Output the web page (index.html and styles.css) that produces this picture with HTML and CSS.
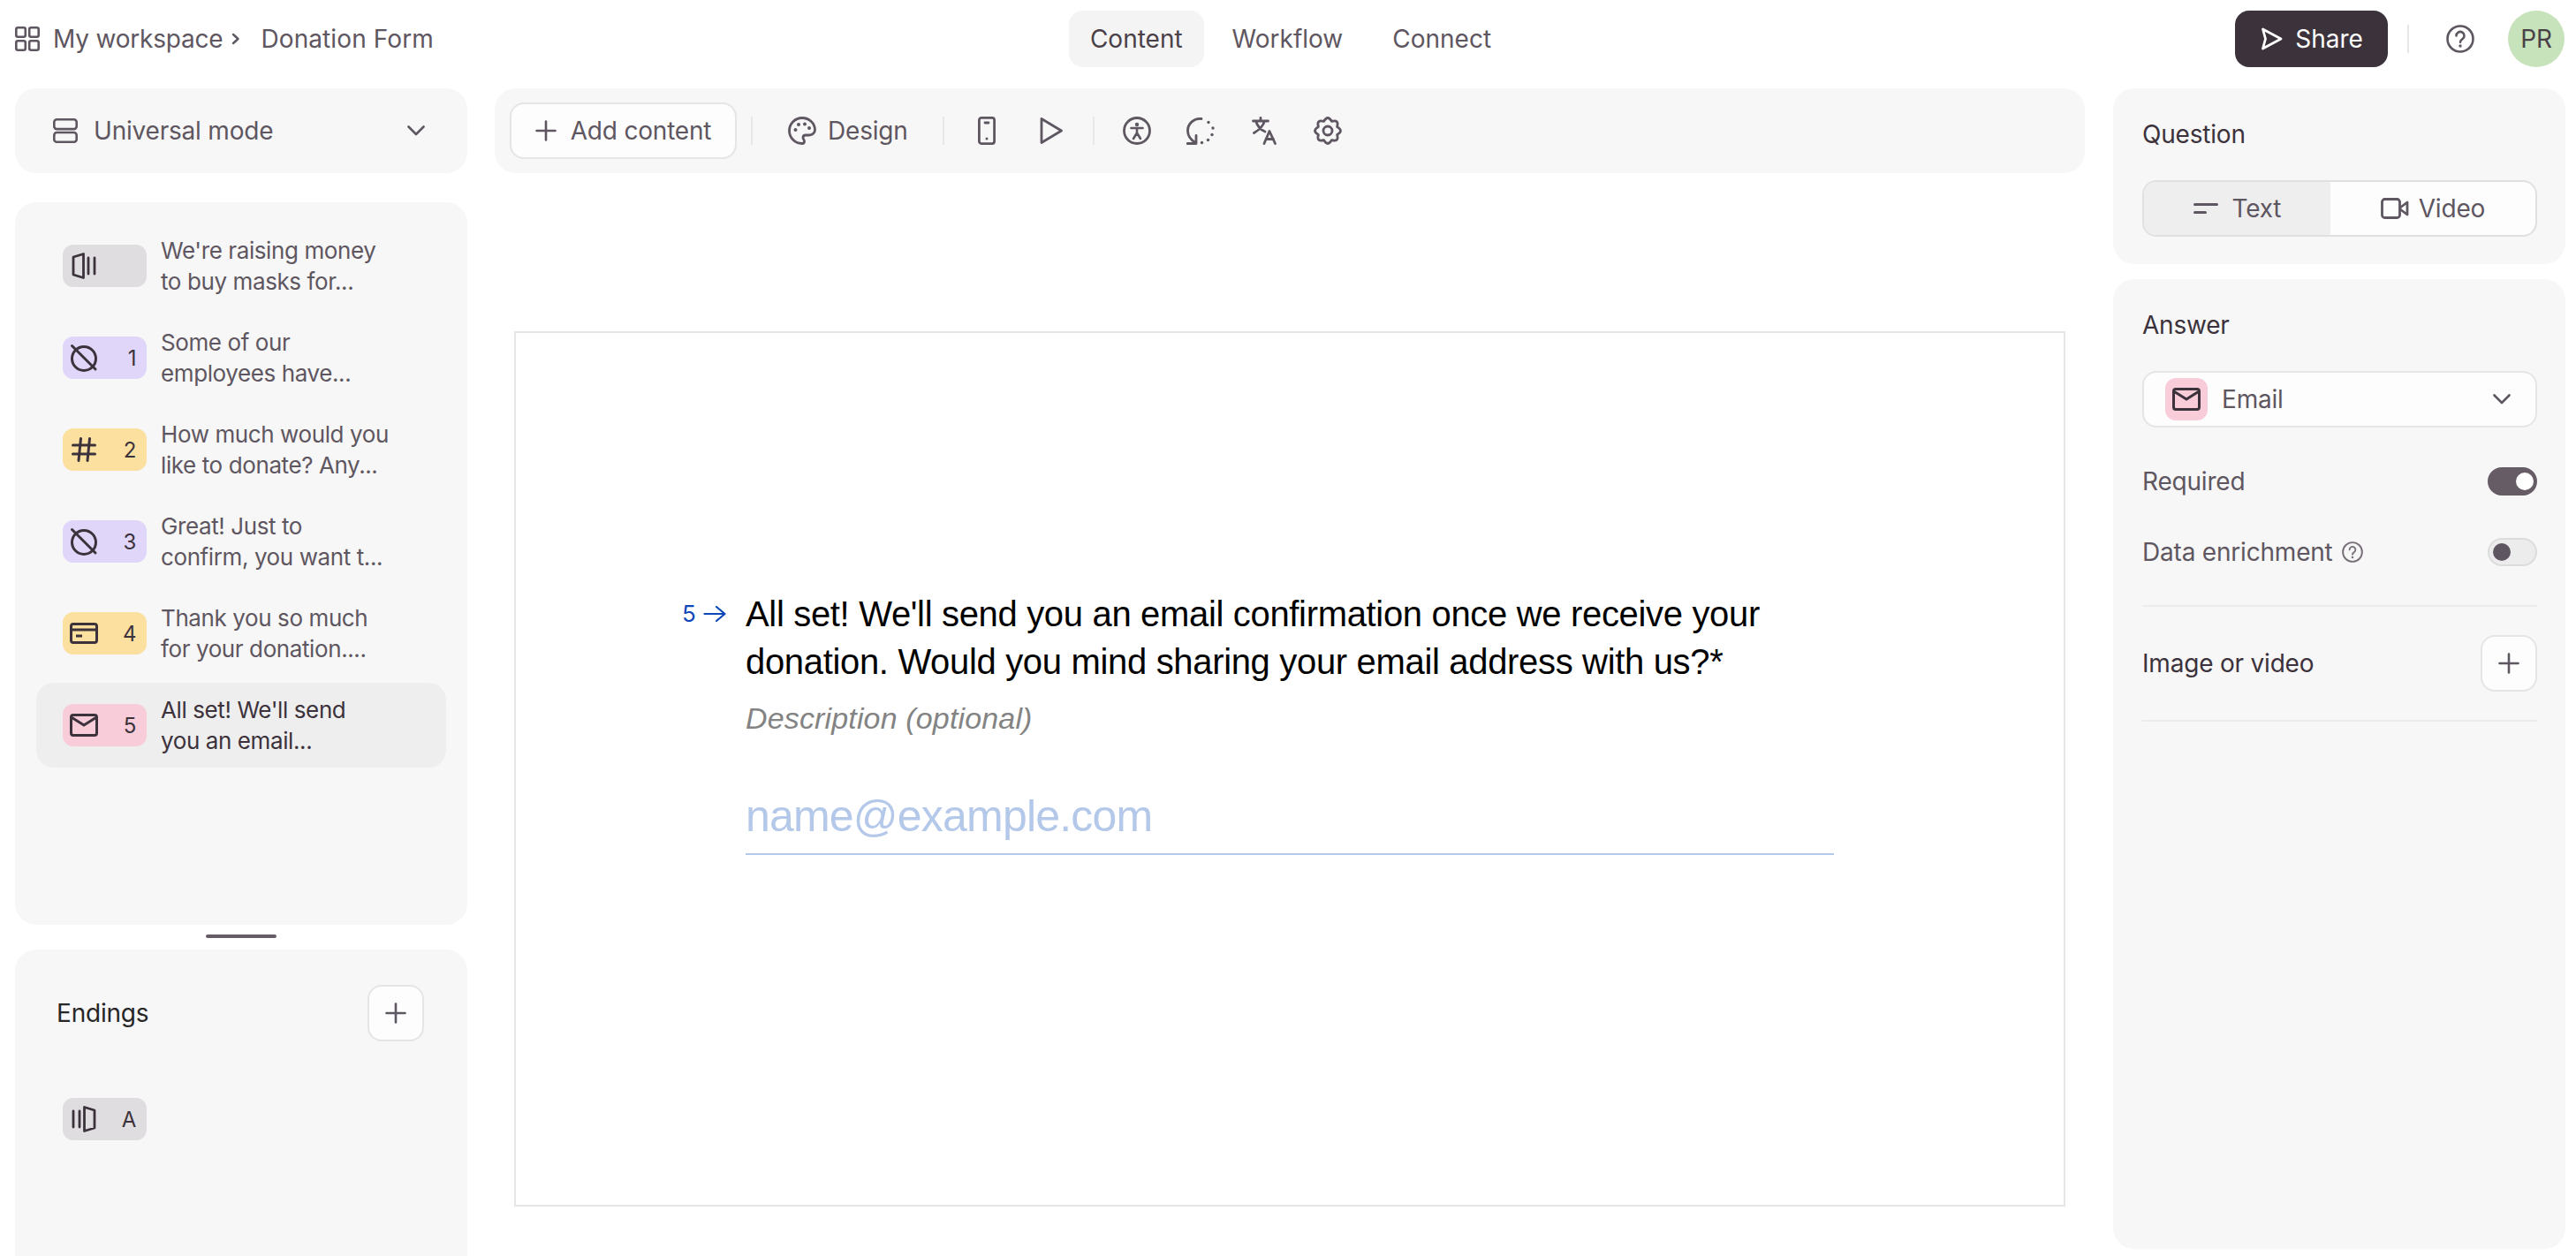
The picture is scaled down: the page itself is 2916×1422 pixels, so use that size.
FILE: index.html
```html
<!DOCTYPE html>
<html lang="en">
<head>
<meta charset="utf-8">
<title>Donation Form</title>
<link rel="stylesheet" href="styles.css">
</head>
<body>
<svg class="defs" width="0" height="0" aria-hidden="true">
  <symbol id="i-plus" viewBox="0 0 24 24"><path d="M12 1.500v21M1.500 12h21" fill="none" stroke="currentColor" stroke-width="2.600" stroke-linecap="round"/></symbol>
  <symbol id="i-chev" viewBox="0 0 20 12"><path d="M1.500 1.500 10 10l8.500-8.500" fill="none" stroke="currentColor" stroke-width="2.600" stroke-linecap="round" stroke-linejoin="round"/></symbol>
  <symbol id="i-mail" viewBox="0 -3 32 32"><rect x="1.500" y="1.500" width="29" height="23" rx="2.500" fill="none" stroke="currentColor" stroke-width="3"/><path d="M2.500 4.500 16 13 29.500 4.500" fill="none" stroke="currentColor" stroke-width="3"/></symbol>
  <symbol id="i-block" viewBox="0 0 32 32"><circle cx="16" cy="17" r="13.500" fill="none" stroke="currentColor" stroke-width="3"/><path d="M2.500 2.500 29 29" fill="none" stroke="currentColor" stroke-width="3" stroke-linecap="round"/></symbol>
  <symbol id="i-hash" viewBox="-2 -2 32 32"><path d="M10.500 1.500 8 26.500M20.500 1.500 18 26.500M1.500 9h25M1.500 19h25" fill="none" stroke="currentColor" stroke-width="3" stroke-linecap="round"/></symbol>
  <symbol id="i-card" viewBox="0 -4 32 32"><rect x="1.500" y="1.500" width="29" height="21" rx="2.500" fill="none" stroke="currentColor" stroke-width="3"/><path d="M2 8h28M7 15h7" fill="none" stroke="currentColor" stroke-width="3"/></symbol>
  <symbol id="i-welcome" viewBox="-2 -1 32 32"><path d="M2 5 13.500 1.500v27L2 25Z" fill="none" stroke="currentColor" stroke-width="2.800" stroke-linejoin="round"/><path d="M19 6v18M26 6v18" fill="none" stroke="currentColor" stroke-width="2.800" stroke-linecap="round"/></symbol>
  <symbol id="i-end" viewBox="-2 -1 32 32"><path d="M26 5 14.500 1.500v27L26 25Z" fill="none" stroke="currentColor" stroke-width="2.800" stroke-linejoin="round"/><path d="M2 6v18M9 6v18" fill="none" stroke="currentColor" stroke-width="2.800" stroke-linecap="round"/></symbol>
  <symbol id="i-help" viewBox="0 0 32 32"><circle cx="16" cy="16" r="14.500" fill="none" stroke="currentColor" stroke-width="2.600"/><path d="M11.500 12.500a4.500 4.500 0 1 1 7 3.700c-1.600 1-2.500 1.800-2.500 3.600" fill="none" stroke="currentColor" stroke-width="2.600" stroke-linecap="round"/><circle cx="16" cy="24" r="1.700" fill="currentColor"/></symbol>
</svg>

<header class="topbar">
  <div class="crumbs">
    <svg class="ic-grid" viewBox="0 0 28 28"><g fill="none" stroke="currentColor" stroke-width="2.600"><rect x="1.300" y="1.300" width="10.500" height="10.500" rx="2"/><rect x="16.200" y="1.300" width="10.500" height="10.500" rx="2"/><rect x="1.300" y="16.200" width="10.500" height="10.500" rx="2"/><rect x="16.200" y="16.200" width="10.500" height="10.500" rx="2"/></g></svg>
    <span class="crumb-a">My workspace</span>
    <svg class="ic-crumbchev" viewBox="0 0 10 14"><path d="M2 2l5.500 5L2 12" fill="none" stroke="currentColor" stroke-width="2.400" stroke-linecap="round" stroke-linejoin="round"/></svg>
    <span class="crumb-b">Donation Form</span>
  </div>
  <nav class="tabs">
    <span class="tab tab-on">Content</span>
    <span class="tab">Workflow</span>
    <span class="tab">Connect</span>
  </nav>
  <div class="top-right">
    <button class="share">
      <svg class="ic-share" viewBox="0 0 26 26"><path d="M3.500 2 24 13 3.500 24 6.500 13Z" fill="none" stroke="currentColor" stroke-width="2.800" stroke-linejoin="round" stroke-linecap="round"/></svg>
      Share
    </button>
    <span class="vsep vsep-top"></span>
    <svg class="ic-help-top"><use href="#i-help"/></svg>
    <span class="avatar">PR</span>
  </div>
</header>

<main class="shell">
  <aside class="left">
    <div class="panel mode">
      <svg class="ic-mode" viewBox="0 0 28 28"><g fill="none" stroke="currentColor" stroke-width="2.600"><rect x="1.300" y="1.300" width="25.400" height="10.800" rx="3"/><rect x="1.300" y="16" width="25.400" height="10.800" rx="3"/></g></svg>
      <span class="mode-label">Universal mode</span>
      <svg class="ic-chev"><use href="#i-chev"/></svg>
    </div>
    <div class="panel list">
      <div class="row">
        <span class="chip c-gray"><svg class="chip-ic"><use href="#i-welcome"/></svg></span>
        <span class="row-text">We're raising money<br>to buy masks for...</span>
      </div>
      <div class="row">
        <span class="chip c-purple"><svg class="chip-ic"><use href="#i-block"/></svg><b>1</b></span>
        <span class="row-text">Some of our<br>employees have...</span>
      </div>
      <div class="row">
        <span class="chip c-yellow"><svg class="chip-ic"><use href="#i-hash"/></svg><b>2</b></span>
        <span class="row-text">How much would you<br>like to donate? Any...</span>
      </div>
      <div class="row">
        <span class="chip c-purple"><svg class="chip-ic"><use href="#i-block"/></svg><b>3</b></span>
        <span class="row-text">Great! Just to<br>confirm, you want t...</span>
      </div>
      <div class="row">
        <span class="chip c-yellow"><svg class="chip-ic"><use href="#i-card"/></svg><b>4</b></span>
        <span class="row-text">Thank you so much<br>for your donation....</span>
      </div>
      <div class="row row-on">
        <span class="chip c-pink"><svg class="chip-ic"><use href="#i-mail"/></svg><b>5</b></span>
        <span class="row-text">All set! We'll send<br>you an email...</span>
      </div>
    </div>
    <div class="handle"></div>
    <div class="panel endings">
      <div class="end-head">
        <span class="end-title">Endings</span>
        <button class="sq-btn"><svg class="ic-plus"><use href="#i-plus"/></svg></button>
      </div>
      <div class="end-row">
        <span class="chip c-gray"><svg class="chip-ic"><use href="#i-end"/></svg><b>A</b></span>
      </div>
    </div>
  </aside>

  <section class="center">
    <div class="panel toolbar">
      <button class="add"><svg class="ic-plus"><use href="#i-plus"/></svg>Add content</button>
      <span class="vsep vs-1"></span>
      <span class="tool-design">
        <svg class="ic-tool" viewBox="0 0 32 32"><path d="M16 1.500C8 1.500 1.500 8 1.500 16S8 30.500 16 30.500c1.500 0 2.500-1 2.500-2.500 0-2-1.500-2.500-1.500-4 0-1.800 1.200-3 3-3h4c3.500 0 6.500-2.500 6.500-6C30.500 7.500 24 1.500 16 1.500Z" fill="none" stroke="currentColor" stroke-width="2.800" stroke-linejoin="round"/><circle cx="8.500" cy="15" r="2" fill="currentColor"/><circle cx="12" cy="9" r="2" fill="currentColor"/><circle cx="19" cy="8.500" r="2" fill="currentColor"/><circle cx="24" cy="13" r="2" fill="currentColor"/></svg>
        Design
      </span>
      <span class="vsep vs-2"></span>
      <svg class="ic-phone" viewBox="0 0 20 32"><rect x="1.400" y="1.400" width="17.200" height="29.200" rx="2.500" fill="none" stroke="currentColor" stroke-width="2.800"/><path d="M8 7h4" stroke="currentColor" stroke-width="2.800" stroke-linecap="round"/><circle cx="10" cy="25" r="1.500" fill="currentColor"/></svg>
      <svg class="ic-play" viewBox="0 0 26 32"><path d="M2 2.500 24.500 16 2 29.500Z" fill="none" stroke="currentColor" stroke-width="2.800" stroke-linejoin="round"/></svg>
      <span class="vsep vs-3"></span>
      <svg class="ic-tool ic-acc" viewBox="0 0 32 32"><circle cx="16" cy="16" r="14.500" fill="none" stroke="currentColor" stroke-width="2.800"/><circle cx="16" cy="9" r="2.200" fill="currentColor"/><path d="M9.500 13h13M16 13v5.500M16 18.500 12 25M16 18.500l4 6.500" fill="none" stroke="currentColor" stroke-width="2.600" stroke-linecap="round"/></svg>
      <svg class="ic-tool ic-logic" viewBox="0 0 32 32"><path d="M17 2.500C8.500 1.500 1.500 8 1.500 16c0 5.500 3.500 10.500 9 13.500" fill="none" stroke="currentColor" stroke-width="2.800" stroke-linecap="round"/><path d="M11 21.500V30.500H1" fill="none" stroke="currentColor" stroke-width="2.800" stroke-linecap="round" stroke-linejoin="round"/><g fill="currentColor"><circle cx="25" cy="6.500" r="1.700"/><circle cx="30" cy="13" r="1.700"/><circle cx="29" cy="20.500" r="1.700"/><circle cx="24.500" cy="26.500" r="1.700"/><circle cx="17.500" cy="29.500" r="1.700"/></g></svg>
      <svg class="ic-lang" viewBox="0 0 28 32"><path d="M1.500 5h17M10 1.500V5M4.500 5c2 6 6.500 10.500 10.500 12M14.500 5C13 10.500 8.500 15 2.500 18.500M14 30.500l6-14 6.500 14M16 25.500h8.500" fill="none" stroke="currentColor" stroke-width="2.800" stroke-linecap="round" stroke-linejoin="round"/></svg>
      <svg class="ic-tool" viewBox="0 0 32 32"><path d="M20.400 5.380Q16-2.400 11.600 5.380 3 3 5.380 11.600-2.400 16 5.380 20.400 3 29 11.600 26.620 16 34.400 20.400 26.620 29 29 26.620 20.400 34.400 16 26.620 11.600 29 3 20.400 5.380Z" fill="none" stroke="currentColor" stroke-width="2.800" stroke-linejoin="round"/><circle cx="16" cy="16" r="5" fill="none" stroke="currentColor" stroke-width="2.800"/></svg>
    </div>
    <div class="canvas">
      <div class="question">
        <div class="q-num"><span>5</span><svg class="ic-arrow" viewBox="0 0 26 20"><path d="M1.500 10h23M15 2l9.500 8-9.500 8" fill="none" stroke="currentColor" stroke-width="2.200" stroke-linecap="round" stroke-linejoin="round"/></svg></div>
        <div class="q-body">
          <h1 class="q-title">All set! We'll send you an email confirmation once we receive your donation. Would you mind sharing your email address with us?*</h1>
          <p class="q-desc">Description (optional)</p>
          <div class="q-input">name@example.com</div>
        </div>
      </div>
    </div>
  </section>

  <aside class="right">
    <div class="panel qpanel">
      <h2 class="r-title">Question</h2>
      <div class="seg">
        <span class="seg-item seg-on"><svg class="ic-text" viewBox="0 0 28 14"><path d="M1.500 2.500h25M1.500 11.500h12" fill="none" stroke="currentColor" stroke-width="3" stroke-linecap="round"/></svg>Text</span>
        <span class="seg-item seg-video"><svg class="ic-video" viewBox="0 0 32 24"><rect x="1.500" y="1.500" width="20" height="21" rx="3" fill="none" stroke="currentColor" stroke-width="2.800"/><path d="M22 11l8-6v14l-8-6Z" fill="none" stroke="currentColor" stroke-width="2.800" stroke-linejoin="round"/></svg>Video</span>
      </div>
    </div>
    <div class="panel apanel">
      <h2 class="r-title">Answer</h2>
      <div class="select">
        <span class="chip-sq"><svg class="chip-ic"><use href="#i-mail"/></svg></span>
        <span class="select-label">Email</span>
        <svg class="ic-chev"><use href="#i-chev"/></svg>
      </div>
      <div class="opt opt-req">
        <span>Required</span>
        <span class="toggle toggle-on"></span>
      </div>
      <div class="opt opt-data">
        <span class="opt-label">Data enrichment <svg class="ic-help-sm"><use href="#i-help"/></svg></span>
        <span class="toggle"></span>
      </div>
      <div class="media">
        <span class="media-label">Image or video</span>
        <button class="sq-btn"><svg class="ic-plus"><use href="#i-plus"/></svg></button>
      </div>
    </div>
  </aside>
</main>
</body>
</html>
```

FILE: styles.css
```css
* { box-sizing: border-box; }
html, body { margin: 0; height: 100%; overflow: hidden; }
body {
  width: 2916px;
  height: 1422px;
  background: #fff;
  font-family: Inter, "Liberation Sans", sans-serif;
  font-size: 28px;
  letter-spacing: -0.2px;
  color: #5e5660;
}
.defs { position: absolute; }
button { font: inherit; letter-spacing: inherit; color: inherit; cursor: default; }

.topbar {
  height: 100px;
  padding: 12px 13px 0 17px;
  display: grid;
  grid-template-columns: 1fr auto 1fr;
  align-items: start;
}
.crumbs { display: flex; align-items: center; height: 64px; }
.ic-grid { width: 28px; height: 28px; margin-right: 15px; flex: none; }
.crumb-a { margin-right: 10px; }
.crumb-b { letter-spacing: 0.1px; }
.ic-crumbchev { width: 10px; height: 14px; margin-right: 23px; }
.tabs { display: flex; height: 64px; align-items: center; letter-spacing: 0; padding-left: 2px; }
.tab { height: 64px; line-height: 64px; padding: 0 24px; border-radius: 16px; margin-right: 8px; }
.tab:last-child { margin-right: 0; }
.tab-on { background: #f4f4f4; color: #4a4148; }
.top-right { display: flex; justify-content: flex-end; align-items: center; height: 64px; }
.share {
  height: 64px; width: 173px; border: 0; border-radius: 16px; letter-spacing: 0;
  background: #3c323c; color: #fff;
  display: flex; align-items: center; justify-content: center; gap: 14px;
}
.ic-share { width: 26px; height: 26px; }
.vsep { width: 2px; height: 32px; background: #e7e7e7; flex: none; }
.vsep-top { margin: 0 42px 0 22px; }
.ic-help-top { width: 32px; height: 32px; margin-right: 38px; }
.avatar {
  width: 64px; height: 64px; border-radius: 50%;
  background: #c7e3bb; color: #4a4148;
  display: flex; align-items: center; justify-content: center;
}

.shell { height: 1322px; display: flex; padding-left: 17px; }
.panel { background: #f7f7f7; border-radius: 24px; }

.left { width: 512px; flex: none; display: flex; flex-direction: column; height: 1360px; }
.mode {
  height: 96px; flex: none;
  display: flex; align-items: center;
  padding: 0 48px 0 43px;
}
.ic-mode { width: 28px; height: 28px; margin-right: 18px; flex: none; }
.mode-label { flex: 1; }
.ic-chev { width: 20px; height: 12px; flex: none; }

.list { margin-top: 33px; height: 818px; padding: 24px; flex: none; }
.row { display: flex; align-items: center; height: 96px; padding: 0 24px 0 30px; border-radius: 20px; margin-bottom: 8px; font-size: 26px; line-height: 35px; letter-spacing: -0.4px; }
.row-on { background: #eeeeee; color: #3c323c; }
.row-text { margin-left: 16px; white-space: nowrap; }
.chip {
  width: 95px; height: 48px; flex: none; border-radius: 12px;
  display: flex; align-items: center; justify-content: space-between;
  padding: 0 12px 0 8px; color: #3c323c; font-size: 24px;
}
.chip b { font-weight: 400; }
.chip-ic { width: 32px; height: 32px; flex: none; }
.c-gray { background: #dfdde0; }
.c-purple { background: #dfd6fa; }
.c-yellow { background: #fce0a0; }
.c-pink { background: #f8ccd8; }

.handle { width: 80px; height: 4px; border-radius: 2px; background: #665c66; margin: 11px auto 0; flex: none; }
.endings { margin-top: 13px; flex: 1; padding: 40px 49px 0 47px; }
.end-head { display: flex; align-items: center; justify-content: space-between; height: 64px; color: #262627; }
.sq-btn {
  width: 64px; height: 64px; padding: 0; border: 2px solid #e5e5e5; border-radius: 16px;
  background: #fdfdfd; color: #5e5660;
  display: flex; align-items: center; justify-content: center;
}
.ic-plus { width: 24px; height: 24px; flex: none; }
.end-row { margin: 64px 0 0 -47px; padding-left: 54px; }

.center { width: 1800px; flex: none; margin-left: 31px; }
.toolbar { height: 96px; display: flex; align-items: center; padding: 0 17px; }
.add {
  width: 257px; height: 64px; border: 2px solid #e5e5e5; border-radius: 16px;
  background: #fdfdfd; display: flex; align-items: center; justify-content: center; gap: 16px;
  flex: none;
}
.vs-1 { margin: 0 40px 0 16px; }
.vs-2 { margin: 0 38px 0 39px; }
.vs-3 { margin: 0 32px 0 34px; }
.tool-design { display: flex; align-items: center; gap: 13px; }
.ic-tool { width: 32px; height: 32px; flex: none; margin-right: 40px; }
.ic-tool:last-child { margin-right: 0; }
.tool-design .ic-tool { margin-right: 0; }
.ic-phone { width: 20px; height: 32px; margin-right: 50px; flex: none; }
.ic-play { width: 26px; height: 32px; flex: none; }
.ic-lang { width: 28px; height: 32px; margin: 0 42px 0 2px; flex: none; }

.canvas {
  width: 1756px; height: 991px; margin: 179px 0 0 22px;
  border: 2px solid #e6e6e6;
}
.question { margin: 291px 0 0 260px; position: relative; }
.q-num {
  position: absolute; left: -72px; top: 0;
  color: #0e48b8; font-size: 26px; line-height: 54px;
  display: flex; align-items: center; gap: 8px;
}
.ic-arrow { width: 26px; height: 20px; }
.q-body { width: 1232px; font-family: "Liberation Sans", Arial, sans-serif; letter-spacing: 0; }
.q-title { margin: 0; font-size: 40px; font-weight: 400; line-height: 54px; letter-spacing: -0.33px; color: #000; }
.q-desc { margin: 15px 0 0; font-size: 34px; line-height: 44px; letter-spacing: 0.15px; font-style: italic; color: #838383; }
.q-input { margin-top: 54px; font-size: 50px; line-height: 70px; letter-spacing: -0.8px; padding-bottom: 7px; color: #b4c8e9; border-bottom: 2px solid #b4c8e9; }

.right { width: 512px; flex: none; margin-left: 32px; display: flex; flex-direction: column; gap: 17px; height: 1314px; }
.qpanel { height: 199px; padding: 30px 32px 0 33px; flex: none; }
.r-title { margin: 0; font-size: 28px; font-weight: 400; line-height: 44px; color: #3c323c; }
.seg {
  display: flex; height: 64px; margin-top: 30px;
  border: 2px solid #e0e0e0; border-radius: 16px; overflow: hidden; background: #fdfdfd;
}
.seg-item { flex: 1; display: flex; align-items: center; justify-content: center; gap: 16px; }
.seg-on { flex: 0 0 47.6%; background: #eeeeef; }
.seg-video { gap: 11px; }
.ic-text { width: 28px; height: 14px; }
.ic-video { width: 32px; height: 24px; }

.apanel { flex: 1; padding: 30px 32px 0 33px; }
.select {
  height: 64px; margin-top: 30px; background: #fdfdfd; border: 2px solid #e5e5e5; border-radius: 16px;
  display: flex; align-items: center; padding: 0 28px 0 24px;
}
.chip-sq { width: 48px; height: 48px; border-radius: 12px; background: #f8ccd8; color: #3c323c; display: flex; align-items: center; justify-content: center; flex: none; }
.select-label { flex: 1; margin-left: 16px; }
.opt { display: flex; align-items: center; justify-content: space-between; height: 32px; }
.opt-req { margin-top: 45px; }
.opt-data { margin-top: 48px; }
.opt-label { display: flex; align-items: center; gap: 10px; }
.ic-help-sm { width: 24px; height: 24px; color: #7a727a; }
.toggle { width: 56px; height: 32px; border-radius: 16px; background: #ececec; border: 2px solid #dcdcdc; position: relative; flex: none; }
.toggle::after { content: ""; position: absolute; width: 20px; height: 20px; border-radius: 50%; background: #5e5660; left: 4px; top: 4px; }
.toggle-on { background: #665c66; border-color: #665c66; }
.toggle-on::after { background: #fff; left: 30px; }
.media {
  margin-top: 44px; height: 132px;
  border-top: 2px solid #ececec; border-bottom: 2px solid #ececec;
  display: flex; align-items: center; justify-content: space-between;
  color: #3c323c;
}
```
